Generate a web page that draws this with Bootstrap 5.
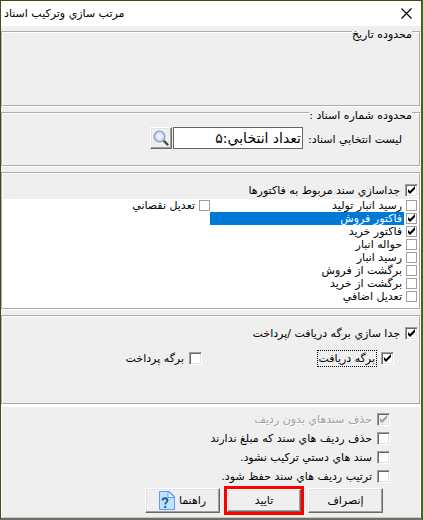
<!DOCTYPE html>
<html lang="fa" dir="rtl">
<head>
<meta charset="utf-8">
<meta name="viewport" content="width=device-width, initial-scale=1">
<title>مرتب سازي وترکيب اسناد</title>
<link href="https://cdn.jsdelivr.net/npm/bootstrap@5.3.0/dist/css/bootstrap.min.css" rel="stylesheet">
<style>
body { background: #efefef; color: #000; font: 11px/13px "DejaVu Sans", sans-serif; min-height: 100vh; border: 1px solid #3f5016; border-right: 2px solid #44651a; border-bottom: 2px solid #6e6e6a; }
.title-bar { background: #fff; height: 25px; padding: 0 9px 0 3px; }
.title-bar h1 { font-size: 11px; line-height: 25px; }
.close-btn, .win-btn { background: none; border: 0; padding: 0; color: #000; }
.group-box { border: 2px groove #fff; margin: 0 0 5px; padding: 0; min-width: 0; }
.group-box legend { float: none; width: auto; height: 8px; margin: 0 7px 0 0; padding: 0; font-size: 11px; line-height: 14px; white-space: nowrap; }
.date-box { height: 79px; margin: 2px 0; }
.number-box { height: 58px; }
.invoice-box { height: 138px; }
.receipt-box { height: 90px; }
.number-row { padding: 10px 17px 0 0; }
.number-row label { width: 99px; padding-top: 3px; }
.picked { width: 130px; height: 22px; border: 1px solid #646464; border-radius: 0; background: #fff; padding: 0 1px; font-size: 14px; color: #000; }
.win-btn { border: 1px solid; border-color: #fff #696969 #696969 #fff; box-shadow: inset -1px -1px #a0a0a0, inset 1px 1px #e3e3e3; background: #efefef; font-size: 11px; line-height: 13px; }
.find-btn { width: 22px; height: 22px; margin-right: 1px; }
.tick { appearance: none; flex: none; width: 13px; height: 13px; margin: 0; border: 1px solid; border-color: #a0a0a0 #fff #fff #a0a0a0; box-shadow: inset 1px 1px #696969, inset -1px -1px #e3e3e3; background: #fff; }
.tick:checked { background: #fff url("data:image/svg+xml,%3Csvg xmlns='http://www.w3.org/2000/svg' viewBox='0 0 11 11'%3E%3Cpath d='M2 4v3l2 2 5-5V1L4 6z'/%3E%3C/svg%3E") center / 11px 11px no-repeat; }
.tick:disabled { background: #efefef url("data:image/svg+xml,%3Csvg xmlns='http://www.w3.org/2000/svg' viewBox='0 0 11 11'%3E%3Cpath fill='%23a0a0a0' d='M2 4v3l2 2 5-5V1L4 6z'/%3E%3C/svg%3E") center / 11px 11px no-repeat; }
.opt { display: flex; align-items: center; gap: 5px; white-space: nowrap; }
.opt-head { padding: 8px 1px 0 0; height: 25px; }
.check-list { background: #fff; height: 109px; padding-right: 2px; }
.check-list .opt { height: 13px; gap: 2px; }
.check-list .tick { width: 11px; height: 11px; border-color: #a0a0a0; box-shadow: none; }
.check-list .opt span { flex: 1; line-height: 13px; padding-right: 2px; }
.check-list .picked-row span { background: #0078d7; color: #fff; }
.focus-text { outline: 1px dotted #000; padding: 1px; }
.receipt-row { padding: 9px 25px 0 7px; }
.foot { border: 1px solid #fff; border-top-width: 2px; border-bottom-color: #c8c8c8; padding: 3px 30px 0 0; }
.off { color: #a0a0a0; text-shadow: 1px 1px #fff; }
.foot .opt { height: 19px; }
.actions { padding: 0 7px 2px 0; gap: 4px; }
.actions .win-btn { width: 75px; height: 25px; }
.ok-frame { border: 3px solid #f00; display: flex; }
.actions .ok-frame .win-btn { width: 74px; height: 23px; }
</style>
</head>
<body class="d-flex flex-column">
<header class="title-bar d-flex align-items-center justify-content-between">
  <button class="close-btn d-flex" aria-label="بستن"><svg width="11" height="11" viewBox="0 0 11 11"><path d="M.5.5l10 10M10.500.5l-10 10" stroke="#000" stroke-width="1.200"/></svg></button>
  <h1 class="m-0 fw-normal">مرتب سازي وترکيب اسناد</h1>
</header>
<main class="flex-grow-1 d-flex flex-column">
  <fieldset class="group-box date-box"><legend>محدوده تاريخ</legend></fieldset>
  <fieldset class="group-box number-box">
    <legend>محدوده شماره اسناد :</legend>
    <div class="number-row d-flex align-items-center">
      <label for="picked" class="text-nowrap">ليست انتخابي اسناد:</label>
      <input id="picked" class="picked" type="text" value="تعداد انتخابي:۵">
      <button class="win-btn find-btn d-flex align-items-center justify-content-center" aria-label="جستجو">
        <svg width="16" height="16" viewBox="0 0 16 16"><defs><radialGradient id="lens"><stop offset="0" stop-color="#fff"/><stop offset="1" stop-color="#bcd6ff"/></radialGradient></defs><path d="M10 10l2 2" stroke="#aaa" stroke-width="2"/><path d="M11.500 11.500l3 3" stroke="#444" stroke-width="2.400" stroke-linecap="round"/><circle cx="6.500" cy="6.500" r="5.300" fill="url(#lens)" stroke="#8c9fb8" stroke-width="1.300"/></svg>
      </button>
    </div>
  </fieldset>
  <fieldset class="group-box invoice-box">
    <div class="opt opt-head"><input class="tick" type="checkbox" id="split" checked><label for="split">جداسازي سند مربوط به فاکتورها</label></div>
    <div class="check-list row g-0">
      <div class="col-6">
        <label class="opt"><input class="tick" type="checkbox"><span>رسيد انبار توليد</span></label>
        <label class="opt picked-row"><input class="tick" type="checkbox" checked><span>فاکتور فروش</span></label>
        <label class="opt"><input class="tick" type="checkbox" checked><span>فاکتور خريد</span></label>
        <label class="opt"><input class="tick" type="checkbox"><span>حواله انبار</span></label>
        <label class="opt"><input class="tick" type="checkbox"><span>رسيد انبار</span></label>
        <label class="opt"><input class="tick" type="checkbox"><span>برگشت از فروش</span></label>
        <label class="opt"><input class="tick" type="checkbox"><span>برگشت از خريد</span></label>
        <label class="opt"><input class="tick" type="checkbox"><span>تعديل اضافي</span></label>
      </div>
      <div class="col-6">
        <label class="opt"><input class="tick" type="checkbox"><span>تعديل نقصاني</span></label>
      </div>
    </div>
  </fieldset>
  <fieldset class="group-box receipt-box mb-0">
    <div class="opt opt-head"><input class="tick" type="checkbox" id="slips" checked><label for="slips">جدا سازي برگه دريافت /پرداخت</label></div>
    <div class="receipt-row row g-0">
      <div class="col-6 opt"><input class="tick" type="checkbox" id="in" checked><label for="in" class="focus-text">برگه دريافت</label></div>
      <div class="col-6 opt"><input class="tick" type="checkbox" id="out"><label for="out">برگه پرداخت</label></div>
    </div>
  </fieldset>
  <section class="foot flex-grow-1">
    <div class="opt off"><input class="tick" type="checkbox" id="o1" checked disabled><label for="o1">حذف سندهاي بدون رديف</label></div>
    <div class="opt"><input class="tick" type="checkbox" id="o2"><label for="o2">حذف رديف هاي سند که مبلغ ندارند</label></div>
    <div class="opt"><input class="tick" type="checkbox" id="o3"><label for="o3">سند هاي دستي ترکيب نشود.</label></div>
    <div class="opt"><input class="tick" type="checkbox" id="o4"><label for="o4">ترتيب رديف هاي سند حفظ شود.</label></div>
    <div class="actions d-flex align-items-center">
      <button class="win-btn">إنصراف</button>
      <div class="ok-frame"><button class="win-btn">تاييد</button></div>
      <button class="win-btn d-flex align-items-center justify-content-center gap-1">راهنما
        <svg width="16" height="19" viewBox="0 0 16 19"><path d="M.5.5h10l5 5v13H.5z" fill="#c3e1fa" stroke="#5a9cf8"/><path d="M9 .5v6h6.500z" fill="#fff" stroke="#5a9cf8"/><path d="M3.500 9.500c0-3 5-3 5 0 0 2-2.300 1.800-2.300 4" fill="none" stroke="#1560a0" stroke-width="1.800"/><path d="M5.200 15h2v2h-2z" fill="#1560a0"/></svg>
      </button>
    </div>
  </section>
</main>
<script src="https://cdn.jsdelivr.net/npm/bootstrap@5.3.0/dist/js/bootstrap.bundle.min.js"></script>
</body>
</html>
